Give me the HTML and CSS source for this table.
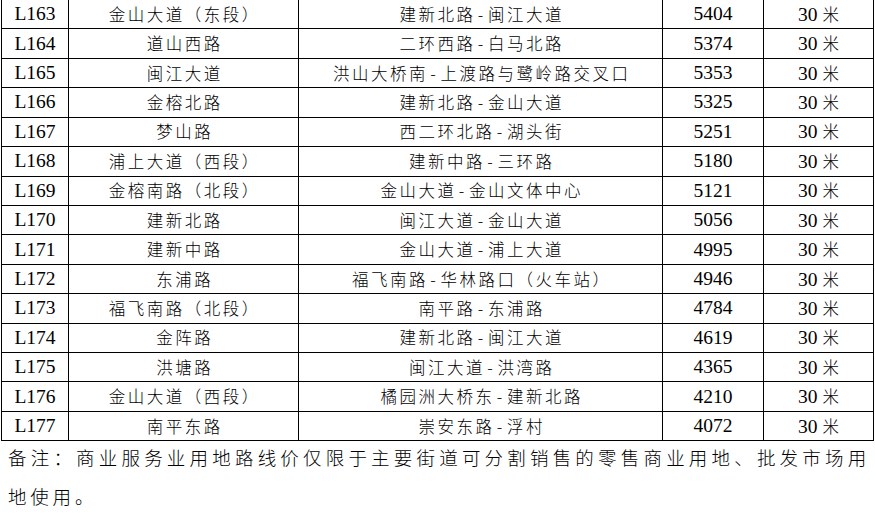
FILE: index.html
```html
<!DOCTYPE html>
<html lang="zh-CN">
<head>
<meta charset="utf-8">
<link rel="stylesheet" href="styles.css">
</head>
<body>
<div class="page">
<table class="price-table">
<colgroup><col class="c1"><col class="c2"><col class="c3"><col class="c4"><col class="c5"></colgroup>
<tbody>
<tr><td>L163</td><td><span class="cn">金山大道（东段）</span></td><td><span class="cn">建新北路<span class="dash">-</span>闽江大道</span></td><td>5404</td><td>30 <span class="cn">米</span></td></tr>
<tr><td>L164</td><td><span class="cn">道山西路</span></td><td><span class="cn">二环西路<span class="dash">-</span>白马北路</span></td><td>5374</td><td>30 <span class="cn">米</span></td></tr>
<tr><td>L165</td><td><span class="cn">闽江大道</span></td><td><span class="cn">洪山大桥南<span class="dash">-</span>上渡路与鹭岭路交叉口</span></td><td>5353</td><td>30 <span class="cn">米</span></td></tr>
<tr><td>L166</td><td><span class="cn">金榕北路</span></td><td><span class="cn">建新北路<span class="dash">-</span>金山大道</span></td><td>5325</td><td>30 <span class="cn">米</span></td></tr>
<tr><td>L167</td><td><span class="cn">梦山路</span></td><td><span class="cn">西二环北路<span class="dash">-</span>湖头街</span></td><td>5251</td><td>30 <span class="cn">米</span></td></tr>
<tr><td>L168</td><td><span class="cn">浦上大道（西段）</span></td><td><span class="cn">建新中路<span class="dash">-</span>三环路</span></td><td>5180</td><td>30 <span class="cn">米</span></td></tr>
<tr><td>L169</td><td><span class="cn">金榕南路（北段）</span></td><td><span class="cn">金山大道<span class="dash">-</span>金山文体中心</span></td><td>5121</td><td>30 <span class="cn">米</span></td></tr>
<tr><td>L170</td><td><span class="cn">建新北路</span></td><td><span class="cn">闽江大道<span class="dash">-</span>金山大道</span></td><td>5056</td><td>30 <span class="cn">米</span></td></tr>
<tr><td>L171</td><td><span class="cn">建新中路</span></td><td><span class="cn">金山大道<span class="dash">-</span>浦上大道</span></td><td>4995</td><td>30 <span class="cn">米</span></td></tr>
<tr><td>L172</td><td><span class="cn">东浦路</span></td><td><span class="cn">福飞南路<span class="dash">-</span>华林路口（火车站）</span></td><td>4946</td><td>30 <span class="cn">米</span></td></tr>
<tr><td>L173</td><td><span class="cn">福飞南路（北段）</span></td><td><span class="cn">南平路<span class="dash">-</span>东浦路</span></td><td>4784</td><td>30 <span class="cn">米</span></td></tr>
<tr><td>L174</td><td><span class="cn">金阵路</span></td><td><span class="cn">建新北路<span class="dash">-</span>闽江大道</span></td><td>4619</td><td>30 <span class="cn">米</span></td></tr>
<tr><td>L175</td><td><span class="cn">洪塘路</span></td><td><span class="cn">闽江大道<span class="dash">-</span>洪湾路</span></td><td>4365</td><td>30 <span class="cn">米</span></td></tr>
<tr><td>L176</td><td><span class="cn">金山大道（西段）</span></td><td><span class="cn">橘园洲大桥东<span class="dash">-</span>建新北路</span></td><td>4210</td><td>30 <span class="cn">米</span></td></tr>
<tr><td>L177</td><td><span class="cn">南平东路</span></td><td><span class="cn">崇安东路<span class="dash">-</span>浮村</span></td><td>4072</td><td>30 <span class="cn">米</span></td></tr>
</tbody>
</table>
<p class="note">备注：商业服务业用地路线价仅限于主要街道可分割销售的零售商业用地、批发市场用地使用。</p>
</div>
</body>
</html>
```

FILE: styles.css
```css
html, body {
  margin: 0;
  padding: 0;
  background: #ffffff;
  overflow: hidden;
}

.page {
  width: 875px;
  height: 521px;
  color: #000000;
  font-family: "Liberation Serif", "Noto Sans CJK SC", serif;
}

.price-table {
  margin: -1px 0 0 1px;
  border-collapse: separate;
  border-spacing: 0;
  table-layout: fixed;
  width: 873px;
  border-left: 1px solid #000;
  border-top: 1px solid #000;
}

.c1 { width: 67px; }
.c2 { width: 230px; }
.c3 { width: 364px; }
.c4 { width: 101px; }
.c5 { width: 110px; }

.price-table tr {
  height: 29.43px;
}

.price-table td {
  box-sizing: border-box;
  padding: 0;
  border-right: 1px solid #000;
  border-bottom: 1px solid #000;
  text-align: center;
  vertical-align: middle;
  font-size: 19.5px;
  line-height: 20px;
  white-space: nowrap;
}

.cn {
  font-family: "Noto Sans CJK SC", sans-serif;
  font-weight: 300;
  font-size: 16.5px;
  letter-spacing: 2.5px;
  margin-right: -2.5px;
}

.dash {
  display: inline-block;
  width: 10px;
  margin-right: 2.5px;
  text-align: center;
  letter-spacing: 0;
}

.note {
  box-sizing: border-box;
  width: 875px;
  margin: -3px 0 0 0;
  padding: 0 5px 0 8px;
  font-family: "Noto Sans CJK SC", sans-serif;
  font-weight: 300;
  font-size: 18.5px;
  line-height: 39px;
  letter-spacing: 3.8px;
  text-align: justify;
}
```
